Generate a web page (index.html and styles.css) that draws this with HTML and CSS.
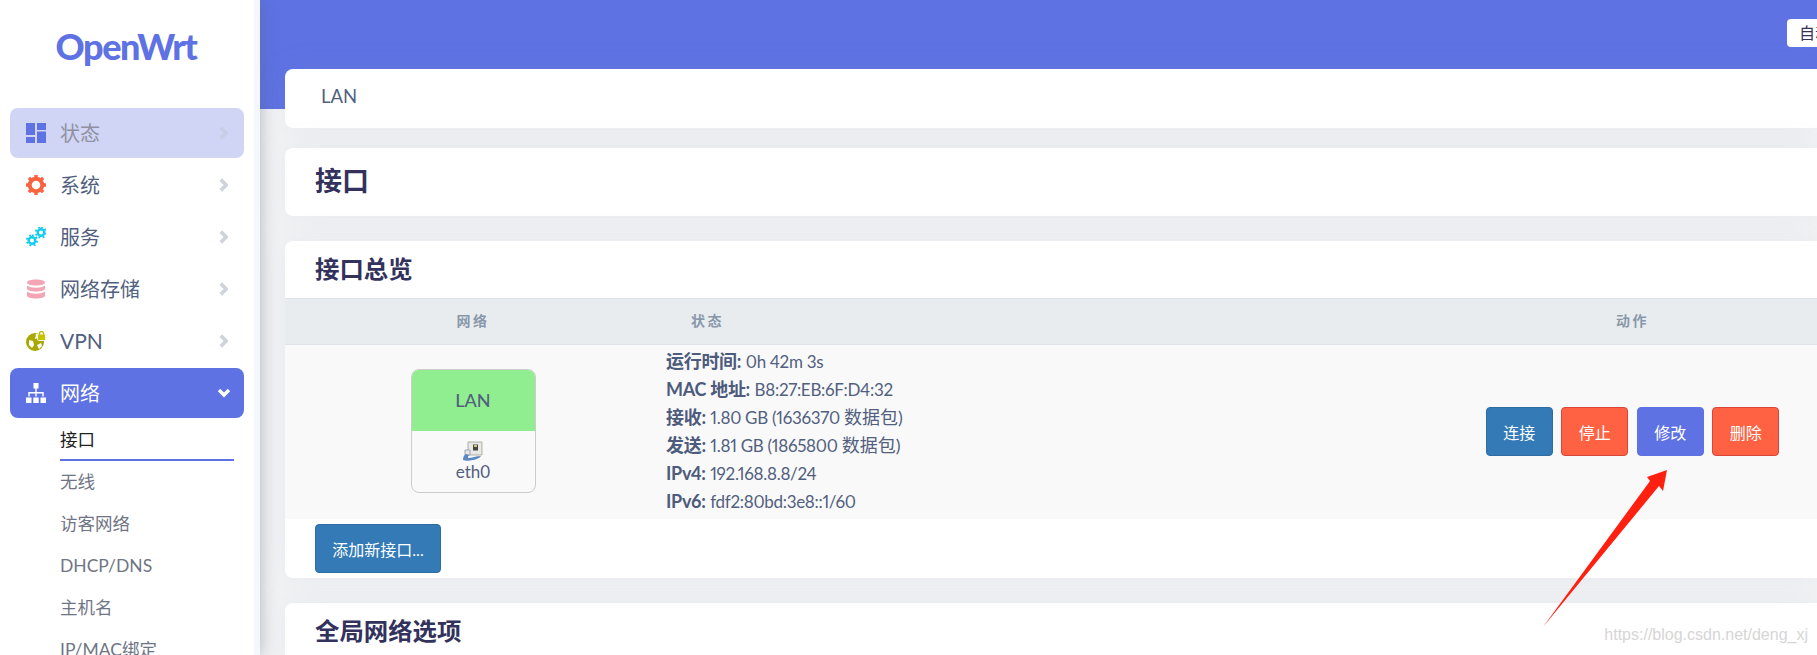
FILE: index.html
```html
<!DOCTYPE html>
<html lang="zh">
<head>
<meta charset="utf-8">
<title>OpenWrt - 接口</title>
<link rel="stylesheet" href="styles.css">
</head>
<body>
<div class="page">
  <aside class="sidebar">
    <div class="brand"><span class="logo">OpenWrt</span></div>
    <nav class="menu">
      <a class="item item-soft">
        <svg class="ico" viewBox="0 0 20 20"><path fill="#5e72e4" d="M0 0h9v12H0zM11 0h9v7h-9zM0 14h9v6H0zM11 8.500h9V20h-9z"/></svg>
        <span class="label">状态</span><svg class="chev" viewBox="0.500 0.500 8 13"><path d="M2 2l5 5-5 5" /></svg>
      </a>
      <a class="item">
        <svg class="ico" viewBox="0 0 20 20"><circle cx="10" cy="10" r="6.300" fill="none" stroke="#fb6340" stroke-width="4"/><path stroke="#fb6340" stroke-width="3.400" d="M10 0v3.500M10 16.500V20M0 10h3.500M16.500 10H20M2.900 2.900l2.500 2.500M14.600 14.600l2.500 2.500M2.900 17.100l2.500-2.500M14.600 5.400l2.500-2.500"/></svg>
        <span class="label">系统</span><svg class="chev" viewBox="0.500 0.500 8 13"><path d="M2 2l5 5-5 5" /></svg>
      </a>
      <a class="item">
        <svg class="ico" viewBox="0 0 20 20"><g fill="none" stroke="#11cdef"><circle cx="6" cy="13.500" r="3.300" stroke-width="2.400"/><circle cx="15" cy="5.500" r="3.300" stroke-width="2.400"/><path stroke-width="1.800" stroke-dasharray="1.900 2.300" d="M6 8.300a5.200 5.200 0 1 1-.01 0M15 .3a5.200 5.200 0 1 1-.01 0"/></g></svg>
        <span class="label">服务</span><svg class="chev" viewBox="0.500 0.500 8 13"><path d="M2 2l5 5-5 5" /></svg>
      </a>
      <a class="item">
        <svg class="ico" viewBox="0 0 20 20"><path fill="#f3a4b5" d="M1 3.500C1 1.500 5 .5 10 .5s9 1 9 3-4 3-9 3-9-1-9-3zM1 6.500c2 1.700 5.500 2.200 9 2.200s7-.5 9-2.200v3c0 2-4 3-9 3s-9-1-9-3zM1 12.500c2 1.700 5.500 2.200 9 2.200s7-.5 9-2.200v4c0 2-4 3-9 3s-9-1-9-3z"/></svg>
        <span class="label">网络存储</span><svg class="chev" viewBox="0.500 0.500 8 13"><path d="M2 2l5 5-5 5" /></svg>
      </a>
      <a class="item">
        <svg class="ico" viewBox="0 0 20 20"><circle cx="9" cy="11" r="9" fill="#a8a800"/><path fill="#fff" d="M10 3l6 0 2 6-4 1-2-3-3 1zM3 9l4 1 1 4-2 3-3-3zM11 14l4-2 1 3-3 3z"/><rect x="11.500" y="3" width="8" height="6.500" rx="1" fill="#c4c400" stroke="#fff" stroke-width=".8"/><path fill="none" stroke="#b8b800" stroke-width="1.300" d="M13.500 3.500V2.200a2 1.600 0 0 1 4 0v1.300"/></svg>
        <span class="label label-latin">VPN</span><svg class="chev" viewBox="0.500 0.500 8 13"><path d="M2 2l5 5-5 5" /></svg>
      </a>
      <a class="item item-active">
        <svg class="ico" viewBox="0 0 20 20"><path fill="#fff" d="M7.500 0h5v5.500h-5zM9.300 5.500h1.400V9h7v4.500h-1.400V10.400h-5.600v3.100H9.300v-3.100H3.700v3.100H2.300V9h7zM0 14.500h5.500V20H0zM7.300 14.500h5.400V20H7.300zM14.500 14.500H20V20h-5.500z"/></svg>
        <span class="label">网络</span><svg class="chev chev-down" viewBox="0 0 14 10"><path d="M2 2l5 5 5-5" /></svg>
      </a>
      <ul class="sub">
        <li class="sub-current">接口</li>
        <li>无线</li>
        <li>访客网络</li>
        <li>DHCP/DNS</li>
        <li>主机名</li>
        <li>IP/MAC绑定</li>
      </ul>
    </nav>
  </aside>

  <main class="main">
    <div class="topbar"><span class="refresh">自动刷新</span></div>
    <div class="card crumb">LAN</div>
    <div class="card heading"><h1>接口</h1></div>
    <section class="card overview">
      <h2>接口总览</h2>
      <div class="thead">
        <div class="th th-net">网络</div>
        <div class="th th-status">状态</div>
        <div class="th th-act">动作</div>
      </div>
      <div class="row">
        <div class="cell-net">
          <div class="ifbox">
            <div class="ifname">LAN</div>
            <div class="ifdev">
              <svg class="port" viewBox="0 0 20 20"><path fill="#e8e8e4" stroke="#a8a8a0" stroke-width=".9" d="M5 1h14v13H5z"/><rect x="10" y="3.500" width="5" height="6" fill="#444"/><rect x="11" y="4" width="3" height="2" fill="#cfc27a"/><path fill="#e8e8e8" stroke="#8a97a8" stroke-width=".8" d="M2 9h5v5H2z"/><path fill="#5b88c4" d="M0 19c0-3 1-5 3-6l3 1c-1 1-1 2-1 3 4 0 8-2 13-2-2 3-7 4-11 4.500-3 .3-5 .3-7-.500z"/></svg>
              <span>eth0</span>
            </div>
          </div>
        </div>
        <div class="cell-status">
          <div class="info"><b>运行时间:</b> <span class="val">0h 42m 3s</span></div>
          <div class="info"><b>MAC 地址:</b> <span class="val">B8:27:EB:6F:D4:32</span></div>
          <div class="info"><b>接收:</b> <span class="val">1.80 GB (1636370 </span>数据包)</div>
          <div class="info"><b>发送:</b> <span class="val">1.81 GB (1865800 </span>数据包)</div>
          <div class="info"><b>IPv4:</b> <span class="val">192.168.8.8/24</span></div>
          <div class="info"><b>IPv6:</b> <span class="val">fdf2:80bd:3e8::1/60</span></div>
        </div>
        <div class="cell-act">
          <button class="btn btn-blue">连接</button>
          <button class="btn btn-orange">停止</button>
          <button class="btn btn-indigo">修改</button>
          <button class="btn btn-orange">删除</button>
        </div>
      </div>
      <div class="foot"><button class="btn btn-blue btn-add">添加新接口...</button></div>
    </section>
    <section class="card global"><h2>全局网络选项</h2></section>
  </main>
</div>

<svg class="arrow" viewBox="0 0 1817 655"><polygon fill="#ff2010" points="1543,627 1650,481 1647,477 1667,470 1663,491 1659,486"/></svg>
<div class="watermark">https://blog.csdn.net/deng_xj</div>
</body>
</html>
```

FILE: styles.css
```css
* { box-sizing: border-box; }
html, body { margin: 0; height: 100%; overflow: hidden; }
body {
  font-family: "Lato", "Noto Sans CJK SC", sans-serif;
  color: #525f7f;
  background: #f2f3f5;
}
.page { display: flex; width: 1817px; height: 655px; overflow: hidden; }

.sidebar {
  flex: none;
  width: 260px;
  height: 655px;
  background: #fff;
  border-right: 6px solid #f4f8fc;
  box-shadow: 0 0 16px rgba(90, 100, 120, .45);
  position: relative;
  z-index: 2;
  overflow: hidden;
}
.brand { height: 108px; padding: 24px 2px 0 0; text-align: center; }
.logo {
  font-family: "Lato", sans-serif;
  font-weight: 900;
  font-size: 36px;
  line-height: 44px;
  letter-spacing: -1.400px;
  color: #5e72e4;
}
.menu { padding: 0 10px; }
.item {
  display: flex;
  align-items: center;
  height: 50px;
  margin-bottom: 2px;
  padding: 0 16px;
  border-radius: 8px;
  font-size: 20px;
  color: #525f7f;
}
.item-soft { background: #d0d5f6; color: #8f90a0; }
.item-active { background: #5e72e4; color: #fff; }
.ico { width: 20px; height: 20px; flex: none; margin-right: 14px; }
.label { flex: 1; padding-bottom: 2px; }
.label-latin { font-size: 21px; }
.chev { width: 9px; height: 14px; flex: none; }
.chev path { fill: none; stroke: #ced4da; stroke-width: 3.400; }
.item-soft .chev path { stroke: #c8cee6; }
.chev-down { width: 14px; height: 10px; margin-right: -3px; }
.chev-down path { stroke: #fff; }

.sub { list-style: none; margin: -2px 0 0; padding: 0 0 0 50px; width: 224px; }
.sub li {
  height: 42px;
  line-height: 41px;
  font-size: 17.500px;
  color: #6f7585;
  white-space: nowrap;
}
.sub .sub-current { height: 43px; line-height: 43px; color: #222; border-bottom: 2px solid #5e72e4; }

.main {
  flex: 1;
  min-width: 0;
  padding-left: 25px;
  background: linear-gradient(#5e72e4 109px, transparent 109px);
}
.topbar { height: 69px; display: flex; justify-content: flex-end; padding-top: 19px; overflow: hidden; }
.refresh {
  flex: none;
  width: 90px;
  height: 28px;
  margin-right: -60px;
  padding-left: 12px;
  background: #fff;
  border-radius: 4px;
  font-size: 16px;
  line-height: 28px;
  color: #32325d;
  white-space: nowrap;
}
.card {
  background: #fff;
  border-radius: 8px 0 0 8px;
  box-shadow: 0 0 32px rgba(136, 152, 170, .1);
}
.crumb { height: 59px; margin-bottom: 20px; padding-left: 36px; font-size: 18.500px; line-height: 55px; }
.heading { height: 68px; margin-bottom: 25px; padding-left: 30px; }
h1 { margin: 0; font-size: 27px; line-height: 66px; color: #32325d; }
h2 { margin: 0; height: 57px; padding-left: 30px; font-size: 24.400px; line-height: 56px; color: #32325d; }
.overview { height: 337px; margin-bottom: 25px; }
.thead {
  display: grid;
  grid-template-columns: 376px 1fr 369px;
  height: 47px;
  background: #e9ecef;
  border-top: 1px solid #dee2e6;
  border-bottom: 1px solid #dee2e6;
}
.th { font-size: 14px; font-weight: 700; line-height: 44px; color: #8898aa; letter-spacing: 2.500px; }
.th-net, .th-act { text-align: center; }
.th-status { padding-left: 30px; }
.row {
  display: grid;
  grid-template-columns: 376px 1fr 369px;
  height: 174px;
  background: #f9f9f9;
}
.cell-net { display: flex; justify-content: center; padding-top: 24px; }
.ifbox {
  width: 125px;
  height: 124px;
  border: 1px solid #ccc;
  border-radius: 8px;
  overflow: hidden;
  text-align: center;
  font-size: 17px;
}
.ifname { height: 61px; background: #90ee90; font-size: 18px; font-weight: 500; line-height: 60px; }
.ifdev { display: flex; flex-direction: column; align-items: center; padding-top: 10px; line-height: 18px; }
.port { width: 20px; height: 20px; margin-bottom: 2px; }
.cell-status { padding: 2px 0 0 5px; }
.info {
  height: 28px;
  line-height: 28px;
  font-size: 18px;
  white-space: nowrap;
}
.info b { font-weight: 700; color: #4d5b7c; letter-spacing: -.3px; }
.val { font-size: 17px; letter-spacing: -.3px; font-variant-numeric: proportional-nums; }
.cell-act { display: flex; justify-content: center; align-items: flex-start; gap: 8.500px; padding-top: 62px; }
.btn {
  width: 67px;
  height: 49px;
  padding: 0;
  border: 1px solid;
  border-radius: 4px;
  font-family: inherit;
  font-size: 16px;
  color: #fff;
}
.btn-blue { background: #337ab7; border-color: #2e6da4; }
.btn-orange { background: #ff6243; border-color: #d9453a; }
.btn-indigo { background: #5e72e4; border-color: #5e72e4; }
.foot { padding: 5px 0 0 30px; }
.btn-add { width: 126px; }
.global { height: 60px; }

.arrow { position: absolute; left: 0; top: 0; width: 1817px; height: 655px; z-index: 3; pointer-events: none; }
.watermark {
  position: absolute;
  right: 9px;
  top: 625px;
  z-index: 3;
  font-family: "Liberation Sans", sans-serif;
  font-size: 16px;
  line-height: 20px;
  color: #d6d6d6;
}
```
